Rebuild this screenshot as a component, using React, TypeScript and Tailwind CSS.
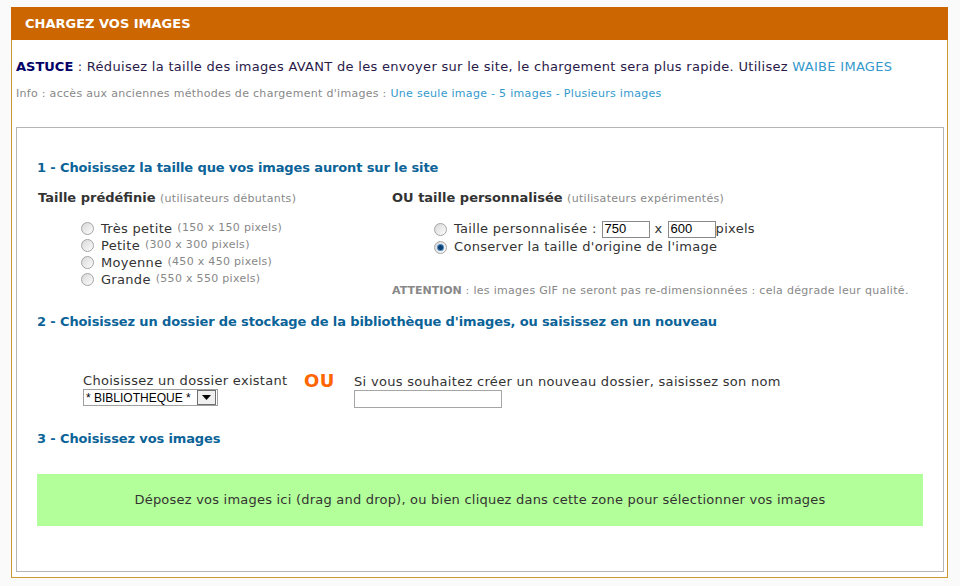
import React from "react";

const F = { fontFamily: '"DejaVu Sans", Verdana, sans-serif' };
const A = { fontFamily: '"Liberation Sans", Arial, sans-serif' };

function Radio({ checked }: { checked?: boolean }) {
  return (
    <span className="inline-flex w-[13px] h-[13px] rounded-full border border-[#a4a4a4] bg-gradient-to-br from-[#d8d8d8] to-[#fdfdfd] items-center justify-center shrink-0">
      {checked ? <span className="w-[5px] h-[5px] rounded-full bg-[#0f3f6e] shadow-[0_0_0_1px_#4a8ac4]" /> : null}
    </span>
  );
}

function RadioRow({ label, note, h = "h-[17px]", checked }: { label: React.ReactNode; note?: string; h?: string; checked?: boolean }) {
  return (
    <div className={`flex items-center ${h}`}>
      <Radio checked={checked} />
      <span className="ml-[7px] text-[13px] text-[#333333] whitespace-nowrap flex items-center">
        {label}
        {note ? <span className="ml-[5px] text-[11px] text-[#888888]">{note}</span> : null}
      </span>
    </div>
  );
}

export default function App() {
  return (
    <div className="w-[960px] h-[586px] bg-[#fafafa] pt-[7px] pl-[11px] tracking-[0.3px]" style={F}>
      <div className="w-[937px] flex flex-col">
        <div className="h-[33px] bg-[#cc6600] flex items-center pl-[14px]">
          <span className="text-white font-bold text-[13px] leading-none tracking-normal">CHARGEZ VOS IMAGES</span>
        </div>
        <div className="h-[538px] bg-white border-l border-r border-b border-[#cc9933] pl-[4px] pr-[3px] flex flex-col">
          <div className="mt-[19px] h-[16px] leading-[16px] text-[13px] text-[#2a1a4a] whitespace-nowrap">
            <span className="font-bold text-[#000066] tracking-normal">ASTUCE</span> : Réduisez la taille des images AVANT de les envoyer sur le site, le chargement sera plus rapide. Utilisez <span className="text-[#3399cc]">WAIBE IMAGES</span>
          </div>
          <div className="mt-[12px] h-[14px] leading-[14px] text-[11px] text-[#888888] whitespace-nowrap">
            Info : accès aux anciennes méthodes de chargement d'images : <span className="text-[#3399cc]">Une seule image - 5 images - Plusieurs images</span>
          </div>
          <div className="mt-[26px] h-[445px] border border-[#b5b5b5] pl-[20px] flex flex-col">
            <div className="mt-[32px] h-[16px] leading-[16px] text-[13px] font-bold text-[#0b6398] tracking-[-0.13px]">
              1 - Choisissez la taille que vos images auront sur le site
            </div>
            <div className="flex mt-[14px]">
              <div className="w-[355px] pl-[1px]">
                <div className="h-[16px] leading-[16px] text-[13px] whitespace-nowrap">
                  <span className="font-bold text-[#333333] tracking-normal">Taille prédéfinie</span>{" "}
                  <span className="text-[11px] text-[#888888]">(utilisateurs débutants)</span>
                </div>
                <div className="mt-[14px] pl-[43px]">
                  <RadioRow label="Très petite" note="(150 x 150 pixels)" />
                  <RadioRow label="Petite" note="(300 x 300 pixels)" />
                  <RadioRow label="Moyenne" note="(450 x 450 pixels)" />
                  <RadioRow label="Grande" note="(550 x 550 pixels)" />
                </div>
              </div>
              <div>
                <div className="h-[16px] leading-[16px] text-[13px] whitespace-nowrap">
                  <span className="font-bold text-[#333333] tracking-normal">OU taille personnalisée</span>{" "}
                  <span className="text-[11px] text-[#888888]">(utilisateurs expérimentés)</span>
                </div>
                <div className="mt-[14px] pl-[42px]">
                  <RadioRow
                    h="h-[18px]"
                    label={
                      <>
                        Taille personnalisée :
                        <span className="ml-[5px] inline-flex w-[48px] h-[17px] border border-[#8a8a8a] bg-white items-center pl-[2px] text-[13px] text-black tracking-normal" style={A}>750</span>
                        <span className="mx-[5px]">x</span>
                        <span className="inline-flex w-[48px] h-[17px] border border-[#8a8a8a] bg-white items-center pl-[2px] text-[13px] text-black tracking-normal" style={A}>600</span>
                        <span>pixels</span>
                      </>
                    }
                  />
                  <RadioRow h="h-[18px]" checked label="Conserver la taille d'origine de l'image" />
                </div>
                <div className="mt-[28px] h-[14px] leading-[14px] text-[11px] text-[#888888] whitespace-nowrap">
                  <span className="font-bold tracking-normal">ATTENTION</span> : les images GIF ne seront pas re-dimensionnées : cela dégrade leur qualité.
                </div>
              </div>
            </div>
            <div className="mt-[16px] h-[16px] leading-[16px] text-[13px] font-bold text-[#0b6398] tracking-[-0.13px]">
              2 - Choisissez un dossier de stockage de la bibliothèque d'images, ou saisissez en un nouveau
            </div>
            <div className="flex mt-[43px] pl-[46px] items-start">
              <div className="w-[221px] flex flex-col">
                <span className="h-[16px] leading-[16px] text-[13px] text-[#333333] whitespace-nowrap">Choisissez un dossier existant</span>
                <div className="w-[135px] h-[17px] border border-[#a0a0a0] flex items-center justify-between bg-white">
                  <span className="text-[12px] text-black leading-none pl-[2px] whitespace-nowrap tracking-normal" style={A}>* BIBLIOTHEQUE *</span>
                  <span className="w-[19px] h-[15px] mr-[1px] border border-[#707070] bg-[#f0f0f0] flex items-center justify-center shrink-0">
                    <svg width="9" height="5" viewBox="0 0 9 5"><polygon points="0,0 9,0 4.5,5" fill="#000" /></svg>
                  </span>
                </div>
              </div>
              <span className="w-[50px] mt-[-2px] text-[18px] leading-[20px] font-bold text-[#ff6600] tracking-[0.5px]">OU</span>
              <div className="flex flex-col">
                <span className="h-[17px] leading-[17px] text-[13px] text-[#333333] whitespace-nowrap">Si vous souhaitez créer un nouveau dossier, saisissez son nom</span>
                <span className="w-[148px] h-[18px] border border-[#a5a5a5] bg-white" />
              </div>
            </div>
            <div className="mt-[23px] h-[16px] leading-[16px] text-[13px] font-bold text-[#0b6398] tracking-[-0.13px]">
              3 - Choisissez vos images
            </div>
            <div className="mt-[27px] w-[886px] h-[52px] bg-[#b3ff99] flex items-center justify-center text-[13px] text-[#333333] tracking-[0.22px]">
              Déposez vos images ici (drag and drop), ou bien cliquez dans cette zone pour sélectionner vos images
            </div>
          </div>
        </div>
      </div>
    </div>
  );
}
